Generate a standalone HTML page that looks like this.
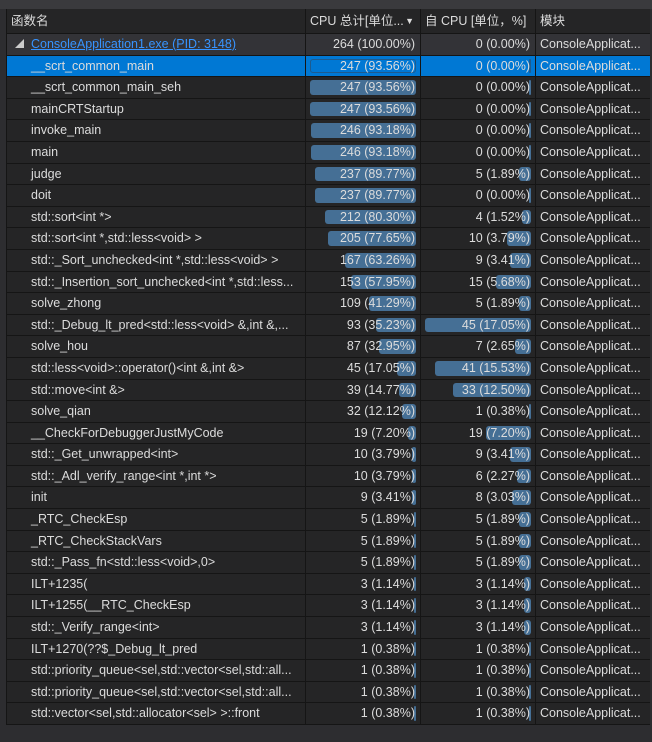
<!DOCTYPE html>
<html><head><meta charset="utf-8"><style>
*{margin:0;padding:0;box-sizing:border-box}
body{width:652px;height:742px;background:#2d2d30;font-family:"Liberation Sans","Noto Sans CJK SC",sans-serif;font-size:12.5px;color:#dcdcdc;position:relative;overflow:hidden}
#top{position:absolute;left:0;top:0;width:652px;height:9px;background:#3a3a3d}
#tbl{position:absolute;left:6px;top:9px;width:644px;border-left:1px solid #151515}
.r{position:relative;height:21.6px;background:#252526;border-bottom:1px solid #151515;white-space:nowrap}
.r>div{position:absolute;top:0;height:100%;line-height:21px;overflow:hidden}
.c1{left:0;width:299px;padding-left:24px;border-right:1px solid #151515}
.c2{left:299px;width:115px;border-right:1px solid #151515;text-align:right;padding-right:5px}
.c3{left:414px;width:115px;border-right:1px solid #151515;text-align:right;padding-right:5px}
.c4{left:529px;width:115px;padding-left:4px}
.b{position:absolute;right:4px;top:3px;bottom:3px;background:#456f95;border-radius:3px}
.t{position:relative}
.h{height:25px;background:#252526}
.h>div{line-height:24px}
.h .c1{padding-left:4px}
.h .c2,.h .c3{text-align:left;padding-left:4px}
.p{background:#333337}
.s{background:#0078d4}
.s .c2 .b{background:transparent;border:1px solid #1d5b8f}
.s .c3 .b{background:#1d5b8f}
</style></head><body>
<div id="top"></div>
<div id="tbl">
<div class="r h"><div class="c1">函数名</div><div class="c2">CPU 总计[单位...<span style="position:absolute;right:6px;top:0;font-size:9px">▼</span></div><div class="c3">自 CPU [单位，%]</div><div class="c4">模块</div></div>
<div class="r p"><div class="c1" style="padding-left:24px"><span style="position:absolute;left:8px;top:0;font-size:9px;color:#ccc">◢</span><span style="color:#3794ff;text-decoration:underline">ConsoleApplication1.exe (PID: 3148)</span></div><div class="c2">264 (100.00%)</div><div class="c3">0 (0.00%)</div><div class="c4">ConsoleApplicat...</div></div>
<div class="r s"><div class="c1">__scrt_common_main</div><div class="c2"><span class="b" style="width:105.7px"></span><span class="t">247 (93.56%)</span></div><div class="c3"><span class="b" style="width:2px"></span><span class="t">0 (0.00%)</span></div><div class="c4">ConsoleApplicat...</div></div>
<div class="r"><div class="c1">__scrt_common_main_seh</div><div class="c2"><span class="b" style="width:105.7px"></span><span class="t">247 (93.56%)</span></div><div class="c3"><span class="b" style="width:2px"></span><span class="t">0 (0.00%)</span></div><div class="c4">ConsoleApplicat...</div></div>
<div class="r"><div class="c1">mainCRTStartup</div><div class="c2"><span class="b" style="width:105.7px"></span><span class="t">247 (93.56%)</span></div><div class="c3"><span class="b" style="width:2px"></span><span class="t">0 (0.00%)</span></div><div class="c4">ConsoleApplicat...</div></div>
<div class="r"><div class="c1">invoke_main</div><div class="c2"><span class="b" style="width:105.3px"></span><span class="t">246 (93.18%)</span></div><div class="c3"><span class="b" style="width:2px"></span><span class="t">0 (0.00%)</span></div><div class="c4">ConsoleApplicat...</div></div>
<div class="r"><div class="c1">main</div><div class="c2"><span class="b" style="width:105.3px"></span><span class="t">246 (93.18%)</span></div><div class="c3"><span class="b" style="width:2px"></span><span class="t">0 (0.00%)</span></div><div class="c4">ConsoleApplicat...</div></div>
<div class="r"><div class="c1">judge</div><div class="c2"><span class="b" style="width:101.4px"></span><span class="t">237 (89.77%)</span></div><div class="c3"><span class="b" style="width:11.7px"></span><span class="t">5 (1.89%)</span></div><div class="c4">ConsoleApplicat...</div></div>
<div class="r"><div class="c1">doit</div><div class="c2"><span class="b" style="width:101.4px"></span><span class="t">237 (89.77%)</span></div><div class="c3"><span class="b" style="width:2px"></span><span class="t">0 (0.00%)</span></div><div class="c4">ConsoleApplicat...</div></div>
<div class="r"><div class="c1">std::sort&lt;int *&gt;</div><div class="c2"><span class="b" style="width:90.7px"></span><span class="t">212 (80.30%)</span></div><div class="c3"><span class="b" style="width:9.5px"></span><span class="t">4 (1.52%)</span></div><div class="c4">ConsoleApplicat...</div></div>
<div class="r"><div class="c1">std::sort&lt;int *,std::less&lt;void&gt; &gt;</div><div class="c2"><span class="b" style="width:87.7px"></span><span class="t">205 (77.65%)</span></div><div class="c3"><span class="b" style="width:23.6px"></span><span class="t">10 (3.79%)</span></div><div class="c4">ConsoleApplicat...</div></div>
<div class="r"><div class="c1">std::_Sort_unchecked&lt;int *,std::less&lt;void&gt; &gt;</div><div class="c2"><span class="b" style="width:71.5px"></span><span class="t">167 (63.26%)</span></div><div class="c3"><span class="b" style="width:21.2px"></span><span class="t">9 (3.41%)</span></div><div class="c4">ConsoleApplicat...</div></div>
<div class="r"><div class="c1">std::_Insertion_sort_unchecked&lt;int *,std::less...</div><div class="c2"><span class="b" style="width:65.5px"></span><span class="t">153 (57.95%)</span></div><div class="c3"><span class="b" style="width:35.3px"></span><span class="t">15 (5.68%)</span></div><div class="c4">ConsoleApplicat...</div></div>
<div class="r"><div class="c1">solve_zhong</div><div class="c2"><span class="b" style="width:46.7px"></span><span class="t">109 (41.29%)</span></div><div class="c3"><span class="b" style="width:11.7px"></span><span class="t">5 (1.89%)</span></div><div class="c4">ConsoleApplicat...</div></div>
<div class="r"><div class="c1">std::_Debug_lt_pred&lt;std::less&lt;void&gt; &amp;,int &amp;,...</div><div class="c2"><span class="b" style="width:39.8px"></span><span class="t">93 (35.23%)</span></div><div class="c3"><span class="b" style="width:106px"></span><span class="t">45 (17.05%)</span></div><div class="c4">ConsoleApplicat...</div></div>
<div class="r"><div class="c1">solve_hou</div><div class="c2"><span class="b" style="width:37.2px"></span><span class="t">87 (32.95%)</span></div><div class="c3"><span class="b" style="width:16.5px"></span><span class="t">7 (2.65%)</span></div><div class="c4">ConsoleApplicat...</div></div>
<div class="r"><div class="c1">std::less&lt;void&gt;::operator()&lt;int &amp;,int &amp;&gt;</div><div class="c2"><span class="b" style="width:19.3px"></span><span class="t">45 (17.05%)</span></div><div class="c3"><span class="b" style="width:96.5px"></span><span class="t">41 (15.53%)</span></div><div class="c4">ConsoleApplicat...</div></div>
<div class="r"><div class="c1">std::move&lt;int &amp;&gt;</div><div class="c2"><span class="b" style="width:16.7px"></span><span class="t">39 (14.77%)</span></div><div class="c3"><span class="b" style="width:77.7px"></span><span class="t">33 (12.50%)</span></div><div class="c4">ConsoleApplicat...</div></div>
<div class="r"><div class="c1">solve_qian</div><div class="c2"><span class="b" style="width:13.7px"></span><span class="t">32 (12.12%)</span></div><div class="c3"><span class="b" style="width:2.4px"></span><span class="t">1 (0.38%)</span></div><div class="c4">ConsoleApplicat...</div></div>
<div class="r"><div class="c1">__CheckForDebuggerJustMyCode</div><div class="c2"><span class="b" style="width:8.1px"></span><span class="t">19 (7.20%)</span></div><div class="c3"><span class="b" style="width:44.8px"></span><span class="t">19 (7.20%)</span></div><div class="c4">ConsoleApplicat...</div></div>
<div class="r"><div class="c1">std::_Get_unwrapped&lt;int&gt;</div><div class="c2"><span class="b" style="width:4.3px"></span><span class="t">10 (3.79%)</span></div><div class="c3"><span class="b" style="width:21.2px"></span><span class="t">9 (3.41%)</span></div><div class="c4">ConsoleApplicat...</div></div>
<div class="r"><div class="c1">std::_Adl_verify_range&lt;int *,int *&gt;</div><div class="c2"><span class="b" style="width:4.3px"></span><span class="t">10 (3.79%)</span></div><div class="c3"><span class="b" style="width:14.1px"></span><span class="t">6 (2.27%)</span></div><div class="c4">ConsoleApplicat...</div></div>
<div class="r"><div class="c1">init</div><div class="c2"><span class="b" style="width:3.9px"></span><span class="t">9 (3.41%)</span></div><div class="c3"><span class="b" style="width:18.8px"></span><span class="t">8 (3.03%)</span></div><div class="c4">ConsoleApplicat...</div></div>
<div class="r"><div class="c1">_RTC_CheckEsp</div><div class="c2"><span class="b" style="width:2.1px"></span><span class="t">5 (1.89%)</span></div><div class="c3"><span class="b" style="width:11.7px"></span><span class="t">5 (1.89%)</span></div><div class="c4">ConsoleApplicat...</div></div>
<div class="r"><div class="c1">_RTC_CheckStackVars</div><div class="c2"><span class="b" style="width:2.1px"></span><span class="t">5 (1.89%)</span></div><div class="c3"><span class="b" style="width:11.7px"></span><span class="t">5 (1.89%)</span></div><div class="c4">ConsoleApplicat...</div></div>
<div class="r"><div class="c1">std::_Pass_fn&lt;std::less&lt;void&gt;,0&gt;</div><div class="c2"><span class="b" style="width:2.1px"></span><span class="t">5 (1.89%)</span></div><div class="c3"><span class="b" style="width:11.7px"></span><span class="t">5 (1.89%)</span></div><div class="c4">ConsoleApplicat...</div></div>
<div class="r"><div class="c1">ILT+1235(</div><div class="c2"><span class="b" style="width:2px"></span><span class="t">3 (1.14%)</span></div><div class="c3"><span class="b" style="width:7.1px"></span><span class="t">3 (1.14%)</span></div><div class="c4">ConsoleApplicat...</div></div>
<div class="r"><div class="c1">ILT+1255(__RTC_CheckEsp</div><div class="c2"><span class="b" style="width:2px"></span><span class="t">3 (1.14%)</span></div><div class="c3"><span class="b" style="width:7.1px"></span><span class="t">3 (1.14%)</span></div><div class="c4">ConsoleApplicat...</div></div>
<div class="r"><div class="c1">std::_Verify_range&lt;int&gt;</div><div class="c2"><span class="b" style="width:2px"></span><span class="t">3 (1.14%)</span></div><div class="c3"><span class="b" style="width:7.1px"></span><span class="t">3 (1.14%)</span></div><div class="c4">ConsoleApplicat...</div></div>
<div class="r"><div class="c1">ILT+1270(??$_Debug_lt_pred</div><div class="c2"><span class="b" style="width:2px"></span><span class="t">1 (0.38%)</span></div><div class="c3"><span class="b" style="width:2.4px"></span><span class="t">1 (0.38%)</span></div><div class="c4">ConsoleApplicat...</div></div>
<div class="r"><div class="c1">std::priority_queue&lt;sel,std::vector&lt;sel,std::all...</div><div class="c2"><span class="b" style="width:2px"></span><span class="t">1 (0.38%)</span></div><div class="c3"><span class="b" style="width:2.4px"></span><span class="t">1 (0.38%)</span></div><div class="c4">ConsoleApplicat...</div></div>
<div class="r"><div class="c1">std::priority_queue&lt;sel,std::vector&lt;sel,std::all...</div><div class="c2"><span class="b" style="width:2px"></span><span class="t">1 (0.38%)</span></div><div class="c3"><span class="b" style="width:2.4px"></span><span class="t">1 (0.38%)</span></div><div class="c4">ConsoleApplicat...</div></div>
<div class="r"><div class="c1">std::vector&lt;sel,std::allocator&lt;sel&gt; &gt;::front</div><div class="c2"><span class="b" style="width:2px"></span><span class="t">1 (0.38%)</span></div><div class="c3"><span class="b" style="width:2.4px"></span><span class="t">1 (0.38%)</span></div><div class="c4">ConsoleApplicat...</div></div>
</div>
</body></html>
